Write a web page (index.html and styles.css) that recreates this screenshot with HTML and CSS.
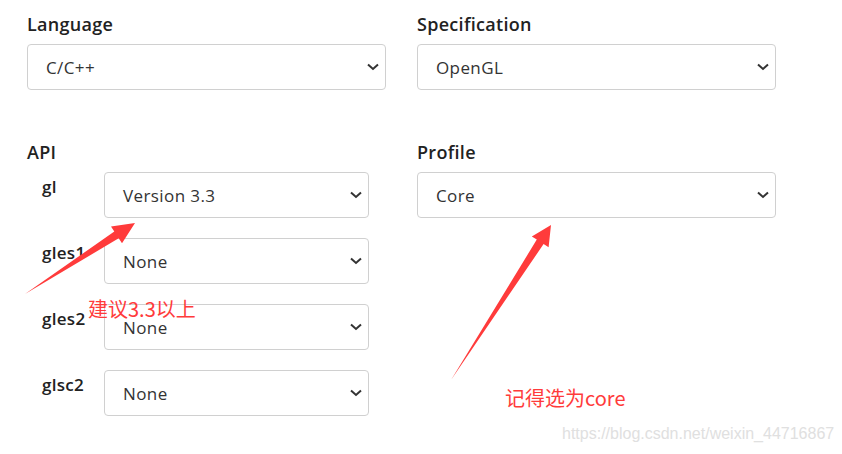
FILE: index.html
```html
<!DOCTYPE html>
<html lang="zh-CN">
<head>
    <meta charset="UTF-8">
    <meta name="viewport" content="width=device-width, initial-scale=1.0">
    <title>glad loader options</title>
    <link rel="stylesheet" href="styles.css">
</head>
<body>
    <div class="page">
        <div class="options">
            <div class="field">
                <label class="field-label">Language</label>
                <div class="select">
                    <span>C/C++</span>
                    <svg class="chevron" width="12" height="8" viewBox="0 0 12 8"><path d="M1 1.5 L6 6 L11 1.5" fill="none" stroke="#333" stroke-width="2"/></svg>
                </div>
            </div>
            <div class="field">
                <label class="field-label">Specification</label>
                <div class="select">
                    <span>OpenGL</span>
                    <svg class="chevron" width="12" height="8" viewBox="0 0 12 8"><path d="M1 1.5 L6 6 L11 1.5" fill="none" stroke="#333" stroke-width="2"/></svg>
                </div>
            </div>

            <div class="field">
                <label class="field-label">API</label>
                <div class="api-list">
                    <span class="api-name">gl</span>
                    <div class="select">
                        <span>Version 3.3</span>
                        <svg class="chevron" width="12" height="8" viewBox="0 0 12 8"><path d="M1 1.5 L6 6 L11 1.5" fill="none" stroke="#333" stroke-width="2"/></svg>
                    </div>
                    <span class="api-name">gles1</span>
                    <div class="select">
                        <span>None</span>
                        <svg class="chevron" width="12" height="8" viewBox="0 0 12 8"><path d="M1 1.5 L6 6 L11 1.5" fill="none" stroke="#333" stroke-width="2"/></svg>
                    </div>
                    <span class="api-name">gles2</span>
                    <div class="select">
                        <span>None</span>
                        <svg class="chevron" width="12" height="8" viewBox="0 0 12 8"><path d="M1 1.5 L6 6 L11 1.5" fill="none" stroke="#333" stroke-width="2"/></svg>
                    </div>
                    <span class="api-name">glsc2</span>
                    <div class="select">
                        <span>None</span>
                        <svg class="chevron" width="12" height="8" viewBox="0 0 12 8"><path d="M1 1.5 L6 6 L11 1.5" fill="none" stroke="#333" stroke-width="2"/></svg>
                    </div>
                </div>
            </div>
            <div class="field">
                <label class="field-label">Profile</label>
                <div class="select">
                    <span>Core</span>
                    <svg class="chevron" width="12" height="8" viewBox="0 0 12 8"><path d="M1 1.5 L6 6 L11 1.5" fill="none" stroke="#333" stroke-width="2"/></svg>
                </div>
            </div>
        </div>

        <!-- red annotations drawn on top of the screenshot -->
        <svg class="arrows" width="842" height="454" viewBox="0 0 842 454">
            <polygon points="25,294 114.3,231.5 111,226.5 135,223 122,243.3 118.7,238.3" fill="#ff3b3b"/>
            <polygon points="451,380 536.8,239.6 531.8,236.4 551,225 548.6,247.2 543.6,244" fill="#ff3b3b"/>
        </svg>
        <div class="note note-version">建议3.3以上</div>
        <div class="note note-core">记得选为core</div>
        <div class="watermark">https://blog.csdn.net/weixin_44716867</div>
    </div>
</body>
</html>
```

FILE: styles.css
```css
/* Basic styles */
body {
    margin: 0;
    padding: 0;
    background-color: #fff;
    font-family: "Open Sans", "Lato", sans-serif;
    color: #222;
}
.page {
    position: relative;
    width: 842px;
    height: 454px;
    overflow: hidden;
    padding: 12px 0 0 27px;
    box-sizing: border-box;
}
.options {
    display: grid;
    grid-template-columns: 359px 359px;
    column-gap: 31px;
    row-gap: 50px;
    align-items: start;
}
.field-label {
    display: block;
    font-size: 18px;
    font-weight: 600;
    letter-spacing: 0.3px;
    line-height: 24px;
    margin-bottom: 8px;
    color: #222;
}

/* fake select boxes */
.select {
    display: flex;
    align-items: center;
    justify-content: space-between;
    height: 46px;
    box-sizing: border-box;
    border: 1px solid #d0d0d0;
    border-radius: 4px;
    padding: 0 6px 0 18px;
    font-size: 17px;
    font-weight: 400;
    letter-spacing: 0.4px;
    color: #333;
}
.chevron {
    flex: none;
}

/* API sub list */
.api-list {
    display: grid;
    grid-template-columns: 62px 265px;
    row-gap: 20px;
    padding-left: 15px;
}
.api-name {
    font-size: 17px;
    font-weight: 600;
    letter-spacing: 0.3px;
    line-height: 22px;
    padding-top: 4px;
}

/* annotations */
.arrows {
    position: absolute;
    left: 0;
    top: 0;
    pointer-events: none;
}
.note {
    position: absolute;
    color: #ff3b3b;
    font-family: "Noto Sans CJK SC", sans-serif;
    font-size: 20px;
    line-height: 24px;
}
.note-version {
    left: 88px;
    top: 297px;
}
.note-core {
    left: 505px;
    top: 386px;
}
.watermark {
    position: absolute;
    left: 562px;
    top: 425px;
    font-family: "Liberation Sans", Arial, sans-serif;
    font-size: 16px;
    color: #e0e0e0;
}
```
